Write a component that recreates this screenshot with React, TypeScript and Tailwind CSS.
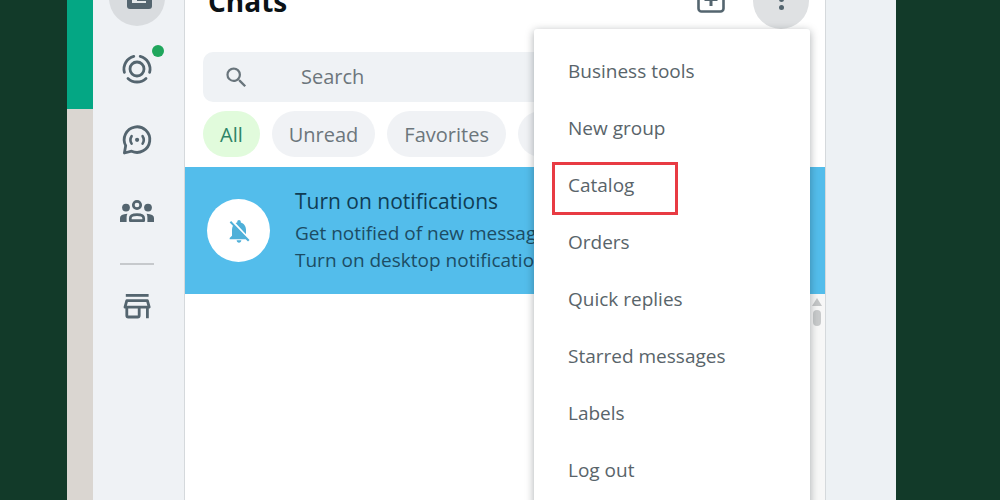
import { MdNotificationsOff, MdSearch } from "react-icons/md";

const filters = ["All", "Unread", "Favorites", "Groups"];

const menuItems = [
  "Business tools",
  "New group",
  "Catalog",
  "Orders",
  "Quick replies",
  "Starred messages",
  "Labels",
  "Log out",
];

function ChatsIcon() {
  return (
    <svg width="32" height="32" viewBox="0 0 32 32">
      <path d="M6 5h25v19a3 3 0 0 1-3 3H9a3 3 0 0 1-3-3z" fill="#54656f" />
      <path d="M11 12h14v9H11z" fill="#e4e8ea" />
      <path d="M16 12h9v7h-9z" fill="#54656f" />
    </svg>
  );
}

function StatusIcon() {
  return (
    <svg width="32" height="32" viewBox="0 0 32 32" fill="none" stroke="#54656f" strokeWidth="2.8" strokeLinecap="round">
      <circle cx="16" cy="16" r="7" />
      <path d="M12.8 3.4A13 13 0 0 0 3.4 19.4" />
      <path d="M19.2 3.4A13 13 0 0 1 28.6 19.4" />
      <path d="M7 25.4A13 13 0 0 0 25 25.4" />
    </svg>
  );
}

function ChannelsIcon() {
  return (
    <svg width="32" height="32" viewBox="0 0 32 32" fill="none" stroke="#54656f" strokeWidth="2.8" strokeLinecap="round" strokeLinejoin="round">
      <path d="M3.4 29 4.7 21.6A12.8 12.8 0 1 1 10.6 27.2z" />
      <path d="M10.6 12.200q-2.4 3.800 0 7.400M21.600 12.200q2.400 3.800 0 7.400" strokeWidth="2.6" />
      <circle cx="16.1" cy="15.8" r="2.100" fill="#54656f" stroke="none" />
    </svg>
  );
}

function CommunitiesIcon() {
  return (
    <svg width="36" height="24" viewBox="0 0 36 24" fill="#54656f">
      <circle cx="18" cy="6" r="3.7" fill="none" stroke="#54656f" strokeWidth="2.7" />
      <circle cx="7" cy="8.6" r="3.9" />
      <circle cx="29" cy="8.6" r="3.9" />
      <path d="M11.3 21.7v-2.4q0-3.7 6.7-3.7t6.7 3.7v2.4z" fill="none" stroke="#54656f" strokeWidth="2.7" strokeLinejoin="round" />
      <path d="M1 23v-4q0-3.8 7.4-4.3Q7.6 16.5 7.6 18.5V23zM35 23v-4q0-3.8-7.4-4.3Q28.4 16.5 28.4 18.5V23z" />
    </svg>
  );
}

function StoreIcon() {
  return (
    <svg width="30" height="28" viewBox="0 0 30 28" fill="none" stroke="#54656f" strokeWidth="2.8" strokeLinejoin="round">
      <path d="M3.8 3.400h22.800" />
      <path d="M4.800 8.600h20.600l1.800 6.600H3z" />
      <path d="M4.800 15.200v8.300q0 1.500 1.500 1.500h9.400q1.500 0 1.500-1.500v-8.300M25.400 15.200v11" />
    </svg>
  );
}

function NewChatIcon() {
  return (
    <svg width="28" height="28" viewBox="0 0 28 28" fill="none" stroke="#54656f" strokeWidth="2.6">
      <rect x="1.5" y="1.5" width="25" height="25" rx="3" />
      <path d="M14 8v13M7.5 14.5h13" strokeWidth="3" />
    </svg>
  );
}

function Sidebar() {
  return (
    <aside className="flex w-[92px] shrink-0 flex-col items-center border-r border-[#d5d9dc] bg-[#eff2f5]">
      <nav className="-mt-[30px] flex flex-col gap-[15px] pr-[3px]">
        <button aria-label="Chats" className="flex size-14 items-center justify-center rounded-full bg-[#d9dcdf]">
          <ChatsIcon />
        </button>
        <button aria-label="Status" className="relative flex size-14 items-center justify-center">
          <StatusIcon />
          <span className="absolute right-[1px] top-1 size-3 rounded-full bg-[#1fa65c]" />
        </button>
        <button aria-label="Channels" className="flex size-14 items-center justify-center">
          <ChannelsIcon />
        </button>
        <button aria-label="Communities" className="flex size-14 items-center justify-center">
          <CommunitiesIcon />
        </button>
      </nav>
      <div className="mt-6 mb-[13px] pr-[3px]">
        <div className="h-[2px] w-[34px] bg-[#c6c9cc]" />
      </div>
      <div className="pr-[3px]">
        <button aria-label="Catalog" className="flex size-14 items-center justify-center">
          <StoreIcon />
        </button>
      </div>
    </aside>
  );
}

function Menu() {
  return (
    <ul className="absolute right-[15px] top-full z-10 w-[276px] rounded-[3px] bg-white py-[14px] shadow-[0_2px_8px_rgba(11,20,26,0.35)]">
      {menuItems.map((item) => (
        <li key={item} className="relative">
          <button className="flex h-[57px] w-full items-center pl-[34px] text-left text-[19px] text-[#59646a]">
            {item}
          </button>
          {item === "Catalog" && (
            <span className="pointer-events-none absolute left-[18px] top-[5px] h-[53px] w-[126px] border-3 border-[#e83b43]" />
          )}
        </li>
      ))}
    </ul>
  );
}

function Banner() {
  return (
    <section className="flex h-[127px] shrink-0 items-center gap-[25px] overflow-hidden bg-[#53bdeb] pl-[22px]">
      <div className="flex size-[63px] shrink-0 items-center justify-center rounded-full bg-white">
        <MdNotificationsOff size={28} color="#4fb0d9" />
      </div>
      <div className="whitespace-nowrap pb-1">
        <h2 className="mb-[2px] text-[21px] leading-[34px] text-[#0f3c54]">Turn on notifications</h2>
        <p className="text-[19px] leading-[27px] text-[#1c4c64]">Get notified of new messages</p>
        <a href="#" className="block text-[19px] leading-[27px] text-[#1c4c64]">
          Turn on desktop notifications
        </a>
      </div>
    </section>
  );
}

export default function App() {
  return (
    <div className="flex h-screen overflow-hidden bg-[#123a29] pl-[67px] pr-[104px] font-['Open_Sans',sans-serif]">
      <div className="w-[26px] shrink-0 bg-[#dad6d1]">
        <div className="h-[109px] bg-[#04a784]" />
      </div>

      <Sidebar />

      <main className="flex min-w-0 flex-1 flex-col border-r border-[#d5d9dc] bg-white">
        <header className="relative -mt-[27px] flex h-14 shrink-0 items-center pl-[23px] pr-4">
          <h1 className="flex-1 text-[28px] font-bold text-[#0b1216]">Chats</h1>
          <button aria-label="New chat" className="mr-7 mb-1">
            <NewChatIcon />
          </button>
          <button aria-label="Menu" className="flex size-14 flex-col items-center justify-center gap-[3px] rounded-full bg-[#dfe1e3] pb-[3px]">
            <span className="size-[5px] rounded-full bg-[#54656f]" />
            <span className="size-[5px] rounded-full bg-[#54656f]" />
            <span className="size-[5px] rounded-full bg-[#54656f]" />
          </button>
          <Menu />
        </header>

        <label className="mx-[18px] mt-[23px] flex h-[50px] shrink-0 items-center rounded-[10px] bg-[#eff2f5] pl-5">
          <MdSearch size={27} color="#69757c" />
          <input
            type="text"
            aria-label="Search"
            placeholder="Search"
            className="ml-[51px] min-w-0 flex-1 bg-transparent text-[20px] outline-none placeholder:text-[#6c767c]"
          />
        </label>

        <div className="mt-[9px] mb-[10px] flex shrink-0 gap-3 overflow-hidden pl-[18px]">
          {filters.map((name) => (
            <button
              key={name}
              className={`h-[46px] rounded-full px-[17px] pt-[2px] text-[20px] ${
                name === "All" ? "bg-[#e1fbdc] text-[#2e8468]" : "bg-[#f0f2f5] text-[#6c767c]"
              }`}
            >
              {name}
            </button>
          ))}
        </div>

        <Banner />

        <div className="flex min-h-0 flex-1 justify-end">
          <div className="flex w-4 flex-col items-center bg-[#f7f7f7] pt-1">
            <svg width="10" height="8" viewBox="0 0 10 8">
              <path d="M5 0l5 8H0z" fill="#c4c6c7" />
            </svg>
            <div className="mt-1 h-4 w-2 rounded-full bg-[#c8cacb]" />
          </div>
        </div>
      </main>

      <div className="w-[70px] shrink-0 bg-[#edf1f4]" />
    </div>
  );
}
